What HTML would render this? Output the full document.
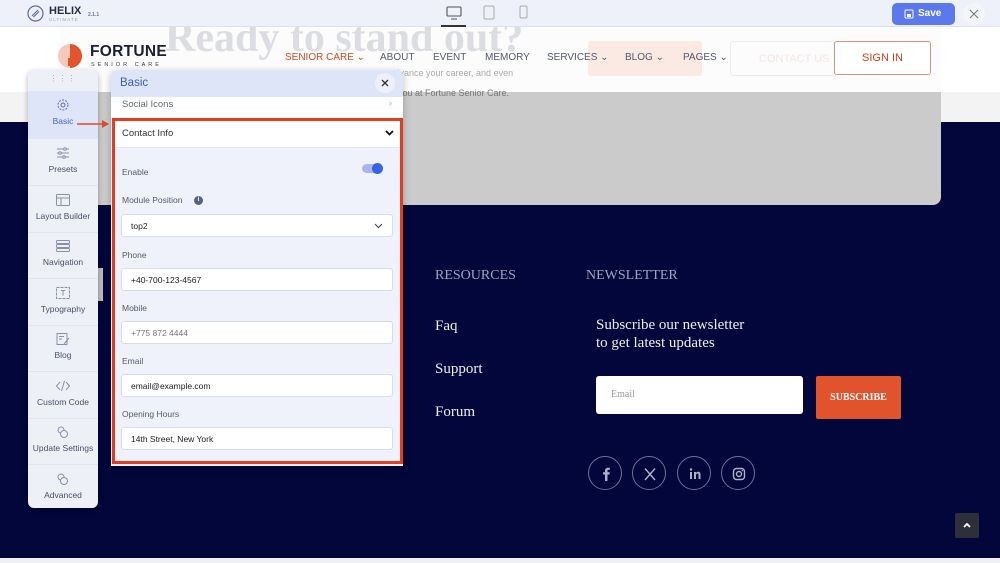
<!DOCTYPE html>
<html><head><meta charset="utf-8"><style>
*{box-sizing:border-box;margin:0;padding:0}
body{width:1000px;height:563px;position:relative;overflow:hidden;font-family:"Liberation Sans",sans-serif;background:#02063a}
.a{position:absolute}
.serif{font-family:"Liberation Serif",serif}
.sb{left:28px;top:70px;width:70px;height:438px;background:#eef0f8;border-radius:6px;box-shadow:0 2px 6px rgba(0,0,0,.3)}
.si{position:absolute;left:0;width:70px;height:46.5px;text-align:center;font-size:8.5px;color:#4a4f6a;border-bottom:1px solid #e2e5ef}
.si svg{display:block;margin:7px auto 4px}
.lab{position:absolute;left:122px;font-size:8.5px;color:#555a70}
.inp{position:absolute;left:121px;width:272px;height:23px;background:#fff;border:1px solid #d8dce6;border-radius:3px;font-size:8.5px;color:#222;padding:6px 9px}
.soc{position:absolute;top:456px;width:34px;height:34px;border:1px solid #6d7096;border-radius:50%}
.soc svg{position:absolute;left:9px;top:9px}
</style></head><body>
<div class="a" style="left:0;top:27px;width:1000px;height:95px;background:#f3f3f3"></div>
<div class="a" style="left:0;top:27px;width:1000px;height:65px;background:#fff"></div>
<div class="a" style="left:60px;top:27px;width:881px;height:178px;background:#cbcbcb;border-radius:0 0 8px 8px"></div>
<div class="a" style="left:60px;top:27px;width:881px;height:65px;background:rgba(255,255,255,.94)"></div>
<div class="a serif" style="left:165px;top:14px;font-size:42px;font-weight:bold;color:#dcdde2;white-space:nowrap">Ready to stand out?</div>
<div class="a" style="left:380px;top:68px;font-size:9px;color:#aaa">s, advance your career, and even</div>
<div class="a" style="left:380px;top:88px;font-size:9px;color:#777">t for you at Fortune Senior Care.</div>
<div class="a" style="left:588px;top:41px;width:114px;height:35px;background:#fbe9e4;border-radius:3px"></div>
<div class="a" style="left:730px;top:41px;width:105px;height:35px;border:1px solid #f3e8e5;border-radius:3px;font-size:11px;color:#f6e6e2;padding:11px 0 0 28px">CONTACT US</div>
<div class="a" style="left:834px;top:41px;width:97px;height:34px;border:1px solid #d9907e;border-radius:3px;background:#fff;font-size:11px;color:#c8401c;text-align:center;line-height:33px">SIGN IN</div>
<svg class="a" style="left:57px;top:43px" width="26" height="26"><circle cx="13" cy="13" r="12" fill="#f6c9bb"/><path d="M13 1a12 12 0 0 1 0 24z" fill="#e0552c"/><rect x="11" y="15" width="7" height="8" fill="#e0552c"/></svg>
<div class="a" style="left:90px;top:43px;font-size:15.5px;font-weight:bold;color:#1b1d3a;letter-spacing:.3px">FORTUNE</div>
<div class="a" style="left:91px;top:62px;font-size:5.5px;color:#3d3f57;letter-spacing:3px">SENIOR CARE</div>
<div class="a" style="top:52px;left:285px;font-size:10px;color:#555a6e;white-space:nowrap"><span style="color:#d24a22">SENIOR CARE ⌄</span><span style="position:absolute;left:95px">ABOUT</span><span style="position:absolute;left:148px">EVENT</span><span style="position:absolute;left:200px">MEMORY</span><span style="position:absolute;left:262px">SERVICES ⌄</span><span style="position:absolute;left:340px">BLOG ⌄</span><span style="position:absolute;left:398px">PAGES ⌄</span></div>
<div class="a" style="left:0;top:0;width:1000px;height:27px;background:#eef1fa;border-bottom:1px solid #dde1ec"></div>
<svg class="a" style="left:27px;top:5px" width="17" height="17"><circle cx="8.5" cy="8.5" r="7.5" fill="none" stroke="#5a6aa6" stroke-width="1.2"/><path d="M5 11L11 5M6.5 12L12 6.5" stroke="#5a6aa6" stroke-width="1.1"/></svg>
<div class="a" style="left:49px;top:5px;font-size:11px;font-weight:bold;color:#2a2d45">HELIX</div>
<div class="a" style="left:49px;top:17px;font-size:4.5px;color:#9aa0b5;letter-spacing:1px">ULTIMATE</div>
<div class="a" style="left:88px;top:12px;font-size:5px;color:#6a73a8;font-weight:bold">2.1.1</div>
<svg class="a" style="left:446px;top:6px" width="16" height="14"><rect x="1" y="1" width="14" height="9" rx="1" fill="none" stroke="#555" stroke-width="1.1"/><path d="M5 13h6" stroke="#555"/></svg>
<div class="a" style="left:441px;top:25px;width:25px;height:2px;background:#333"></div>
<svg class="a" style="left:483px;top:5px" width="12" height="15"><rect x="1" y="1" width="10" height="13" rx="1.5" fill="none" stroke="#aaa"/></svg>
<svg class="a" style="left:519px;top:5px" width="9" height="14"><rect x="1" y="1" width="7" height="12" rx="1.5" fill="none" stroke="#aaa"/></svg>
<div class="a" style="left:892px;top:3px;width:63px;height:22px;background:#5b79ec;border-radius:5px;color:#fff;font-size:10px;font-weight:bold;padding:5px 0 0 26px">Save</div>
<svg class="a" style="left:904px;top:9px" width="10" height="10"><rect x="1" y="1" width="8" height="8" rx="1" fill="none" stroke="#fff"/><rect x="3" y="5" width="4" height="3" fill="#fff"/></svg>
<div class="a" style="left:963px;top:3px;width:22px;height:22px;border-radius:50%;background:#f5f6fa"></div>
<svg class="a" style="left:969px;top:9px" width="10" height="10"><path d="M1 1L9 9M9 1L1 9" stroke="#777" stroke-width="1"/></svg>
<div class="a serif" style="left:435px;top:268px;font-size:14px;color:#9fa2c0">RESOURCES</div>
<div class="a serif" style="left:586px;top:268px;font-size:14px;color:#9fa2c0">NEWSLETTER</div>
<div class="a serif" style="left:435px;top:318px;font-size:15px;color:#eee">Faq</div>
<div class="a serif" style="left:435px;top:361px;font-size:15px;color:#eee">Support</div>
<div class="a serif" style="left:435px;top:404px;font-size:15px;color:#eee">Forum</div>
<div class="a serif" style="left:596px;top:316px;font-size:15px;color:#eee;line-height:18px">Subscribe our newsletter<br>to get latest updates</div>
<div class="a serif" style="left:596px;top:376px;width:207px;height:38px;background:#fff;border-radius:3px;font-size:10px;color:#999;padding:13px 0 0 15px">Email</div>
<div class="a serif" style="left:816px;top:376px;width:85px;height:43px;background:#e0532c;border-radius:2px;color:#fff;font-size:10px;font-weight:bold;text-align:center;line-height:43px">SUBSCRIBE</div>
<div class="soc" style="left:588px"><svg width="16" height="16"><path d="M9.5 15V8.5h2l.3-2.3H9.5V4.8c0-.6.2-1 1-1h1.3V1.8c-.3 0-1-.1-1.8-.1-1.8 0-3 1.1-3 3.1v1.4H5v2.3h2V15z" fill="#aeb0c8"/></svg></div>
<div class="soc" style="left:632px"><svg width="16" height="16"><path d="M3 2.5L13 14M13 2.5L3 14" stroke="#aeb0c8" stroke-width="1.5"/></svg></div>
<div class="soc" style="left:677px"><svg width="16" height="16"><rect x="3" y="6" width="2" height="7" fill="#aeb0c8"/><circle cx="4" cy="3.5" r="1.2" fill="#aeb0c8"/><path d="M7 6h2v1c.5-.8 1.3-1.2 2.3-1.2 1.7 0 2.2 1.1 2.2 2.8V13h-2V9c0-.9-.2-1.5-1-1.5S9 8.1 9 9v4H7z" fill="#aeb0c8"/></svg></div>
<div class="soc" style="left:721px"><svg width="16" height="16"><rect x="2.5" y="2.5" width="11" height="11" rx="3" fill="none" stroke="#aeb0c8" stroke-width="1.4"/><circle cx="8" cy="8" r="2.5" fill="none" stroke="#aeb0c8" stroke-width="1.4"/><circle cx="11.3" cy="4.7" r=".7" fill="#aeb0c8"/></svg></div>
<div class="a" style="left:955px;top:513px;width:24px;height:25px;background:#2d2f3b;border-radius:2px"></div>
<svg class="a" style="left:962px;top:521px" width="10" height="8"><path d="M2 6L5 3L8 6" stroke="#fff" stroke-width="1.8" fill="none"/></svg>
<div class="a" style="left:0;top:558px;width:1000px;height:5px;background:#eef0f6"></div>
<div class="a" style="left:97px;top:268px;width:6px;height:33px;background:#bdbdbd"></div>
<div class="a sb">
 <div style="text-align:center;color:#aab;font-size:8px;padding-top:4px;height:21px;letter-spacing:1px">⋮⋮⋮</div>
 <div class="si" style="top:21px;background:#dfe5f8;color:#4a62c8;height:48px"><svg width="14" height="14" viewBox="0 0 14 14"><circle cx="7" cy="7" r="2" fill="none" stroke="#5a6fc8"/><circle cx="7" cy="7" r="5" fill="none" stroke="#5a6fc8" stroke-dasharray="2 1.2"/></svg>Basic</div>
 <div class="si" style="top:69px"><svg width="16" height="14"><path d="M2 3h12M2 7h12M2 11h12" stroke="#8a8fa8"/><circle cx="10" cy="3" r="1.3" fill="#eef0f8" stroke="#8a8fa8"/><circle cx="5" cy="7" r="1.3" fill="#eef0f8" stroke="#8a8fa8"/><circle cx="9" cy="11" r="1.3" fill="#eef0f8" stroke="#8a8fa8"/></svg>Presets</div>
 <div class="si" style="top:116px"><svg width="16" height="14"><rect x="1.5" y="1.5" width="13" height="11" rx="1" fill="none" stroke="#8a8fa8"/><path d="M1.5 5h13M6 5v7.5" stroke="#8a8fa8"/></svg>Layout Builder</div>
 <div class="si" style="top:162px"><svg width="16" height="14"><rect x="1.5" y="1.5" width="13" height="3" rx="1" fill="none" stroke="#8a8fa8"/><rect x="1.5" y="5.5" width="13" height="3" rx="1" fill="none" stroke="#8a8fa8"/><rect x="1.5" y="9.5" width="13" height="3" rx="1" fill="none" stroke="#8a8fa8"/></svg>Navigation</div>
 <div class="si" style="top:209px"><svg width="16" height="14"><rect x="1.5" y="1.5" width="13" height="11" fill="none" stroke="#8a8fa8" stroke-dasharray="3 1"/><path d="M6 4.5h4M8 4.5v5" stroke="#8a8fa8"/></svg>Typography</div>
 <div class="si" style="top:255px"><svg width="16" height="14"><rect x="2" y="1.5" width="10" height="11" fill="none" stroke="#8a8fa8"/><path d="M4 4.5h5M4 7h3M9 12l5-6" stroke="#8a8fa8"/></svg>Blog</div>
 <div class="si" style="top:302px"><svg width="16" height="14"><path d="M5 3L1.5 7L5 11M11 3l3.5 4L11 11M9.5 2L6.5 12" stroke="#8a8fa8" fill="none"/></svg>Custom Code</div>
 <div class="si" style="top:348px"><svg width="16" height="14"><circle cx="6" cy="5" r="3" fill="none" stroke="#8a8fa8"/><circle cx="9" cy="9" r="3.5" fill="#eef0f8" stroke="#8a8fa8"/></svg>Update Settings</div>
 <div class="si" style="top:395px;border:0"><svg width="16" height="14"><circle cx="6" cy="5" r="3" fill="none" stroke="#8a8fa8"/><circle cx="9" cy="9" r="3.5" fill="#eef0f8" stroke="#8a8fa8"/></svg>Advanced</div>
</div>
<svg class="a" style="left:76px;top:118px" width="35" height="12"><path d="M1 6h26" stroke="#e04a2c" stroke-width="1.6"/><path d="M26 2l7 4-7 4z" fill="#e04a2c"/></svg>
<div class="a" style="left:111px;top:70px;width:292px;height:396px;background:#eff2fa;border-radius:6px 6px 0 0;box-shadow:0 2px 8px rgba(0,0,0,.25)"></div>
<div class="a" style="left:111px;top:70px;width:292px;height:27px;background:#dfe5f8;border-radius:6px 6px 0 0;font-size:11.5px;color:#3f59c4;padding:7px 0 0 9px">Basic</div>
<div class="a" style="left:375px;top:73px;width:20px;height:20px;border-radius:50%;background:#eef1fb"></div>
<svg class="a" style="left:381px;top:79px" width="8" height="8"><path d="M1 1l6 6M7 1L1 7" stroke="#333" stroke-width="1.3"/></svg>
<div class="a" style="left:111px;top:97px;width:292px;height:21px;background:#fff;font-size:9.5px;color:#666a7c;padding:2px 0 0 11px">Social Icons<span style="position:absolute;right:11px;top:1px;color:#aaa">›</span></div>
<div class="a" style="left:112px;top:118px;width:291px;height:346px;border:3px solid #e23c22;background:#eff2fa"></div>
<div class="a" style="left:115px;top:121px;width:285px;height:27px;background:#fff;border-bottom:1px solid #e3e6ee;font-size:9.5px;color:#333;padding:7px 0 0 7px">Contact Info</div>
<svg class="a" style="left:385px;top:130px" width="9" height="6"><path d="M1 1l3.5 3.5L8 1" stroke="#111" stroke-width="1.8" fill="none"/></svg>
<div class="lab" style="top:167px">Enable</div>
<div class="a" style="left:362px;top:164px;width:21px;height:9px;border-radius:5px;background:#a9b6ea"></div>
<div class="a" style="left:372px;top:163px;width:11px;height:11px;border-radius:50%;background:#3763e6"></div>
<div class="lab" style="top:195px">Module Position</div>
<div class="a" style="left:194px;top:196px;width:9px;height:9px;border-radius:50%;background:#5a6086;color:#fff;font-size:6px;text-align:center;line-height:9px;font-weight:bold">i</div>
<div class="inp" style="top:214px">top2</div>
<svg class="a" style="left:374px;top:223px" width="9" height="6"><path d="M1 1l3.5 3.5L8 1" stroke="#444" stroke-width="1.1" fill="none"/></svg>
<div class="lab" style="top:250px">Phone</div>
<div class="inp" style="top:268px">+40-700-123-4567</div>
<div class="lab" style="top:303px">Mobile</div>
<div class="inp" style="top:321px;color:#777">+775 872 4444</div>
<div class="lab" style="top:356px">Email</div>
<div class="inp" style="top:374px">email@example.com</div>
<div class="lab" style="top:409px">Opening Hours</div>
<div class="inp" style="top:427px">14th Street, New York</div>
</body></html>
